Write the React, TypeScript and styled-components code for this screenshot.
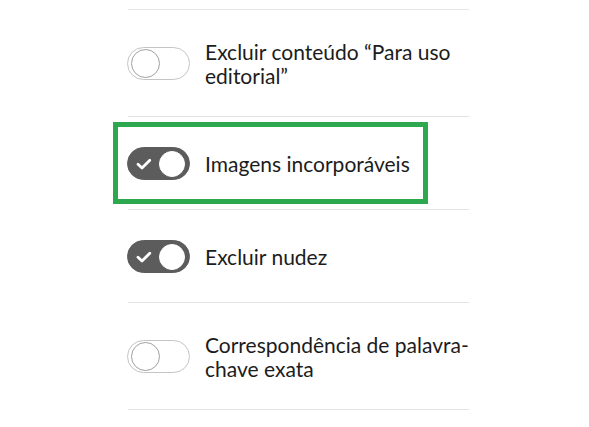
import React from "react";
import styled, { createGlobalStyle } from "styled-components";

const GlobalStyle = createGlobalStyle`
  html, body {
    margin: 0;
    padding: 0;
    background: #ffffff;
  }
  body {
    font-family: Lato, "Open Sans", "Liberation Sans", sans-serif;
    color: #1c1c1c;
  }
`;

const Page = styled.div`
  padding: 9px 0 0 128px;
`;

const List = styled.ul`
  list-style: none;
  margin: 0;
  padding: 0;
  width: 341px;
  border-top: 1px solid #e6e6e6;
`;

const Row = styled.li`
  position: relative;
  display: flex;
  align-items: center;
  gap: 15px;
  padding: 30px 0 29px;
  border-bottom: 1px solid #e3e3e3;
`;

const Highlight = styled.div`
  position: absolute;
  left: -15px;
  top: 5px;
  width: 315px;
  height: 82px;
  box-sizing: border-box;
  border: 5px solid #2ea84f;
  pointer-events: none;
`;

const Track = styled.span<{ $on: boolean }>`
  position: relative;
  flex: 0 0 auto;
  display: inline-flex;
  align-items: center;
  justify-content: ${(p) => (p.$on ? "flex-end" : "flex-start")};
  box-sizing: border-box;
  width: 63px;
  height: 33px;
  margin-left: -1px;
  padding: ${(p) => (p.$on ? "0 4px" : "0 3px")};
  border-radius: 17px;
  background: ${(p) => (p.$on ? "#5c5c5c" : "#ffffff")};
  border: 1px solid ${(p) => (p.$on ? "#5c5c5c" : "#c4c4c4")};
`;

const Knob = styled.span<{ $on: boolean }>`
  display: block;
  box-sizing: border-box;
  width: ${(p) => (p.$on ? "26px" : "29px")};
  height: ${(p) => (p.$on ? "26px" : "29px")};
  border-radius: 50%;
  background: #ffffff;
  border: 1px solid ${(p) => (p.$on ? "#ffffff" : "#a0a0a0")};
`;

const Check = styled.svg`
  position: absolute;
  left: 8px;
  top: 50%;
  transform: translateY(-50%);
`;

const Label = styled.span`
  font-size: 21px;
  line-height: 23.5px;
  font-weight: 400;
  color: #1c1c1c;
`;

type Item = { label: React.ReactNode; on: boolean; highlight?: boolean };

const items: Item[] = [
  { label: "Excluir conteúdo “Para uso editorial”", on: false },
  { label: "Imagens incorporáveis", on: true, highlight: true },
  { label: "Excluir nudez", on: true },
  { label: "Correspondência de palavra-chave exata", on: false },
];

function Toggle({ on }: { on: boolean }) {
  return (
    <Track $on={on} role="switch" aria-checked={on}>
      {on && (
        <Check width="16" height="12" viewBox="0 0 16 12">
          <path
            d="M2 6.2 L6 10 L13.8 2.2"
            fill="none"
            stroke="#ffffff"
            strokeWidth="2.8"
            strokeLinecap="round"
            strokeLinejoin="round"
          />
        </Check>
      )}
      <Knob $on={on} />
    </Track>
  );
}

export default function App() {
  return (
    <>
      <GlobalStyle />
      <Page>
        <List>
          {items.map((it, i) => (
            <Row key={i}>
              {it.highlight && <Highlight />}
              <Toggle on={it.on} />
              <Label>{it.label}</Label>
            </Row>
          ))}
        </List>
      </Page>
    </>
  );
}
